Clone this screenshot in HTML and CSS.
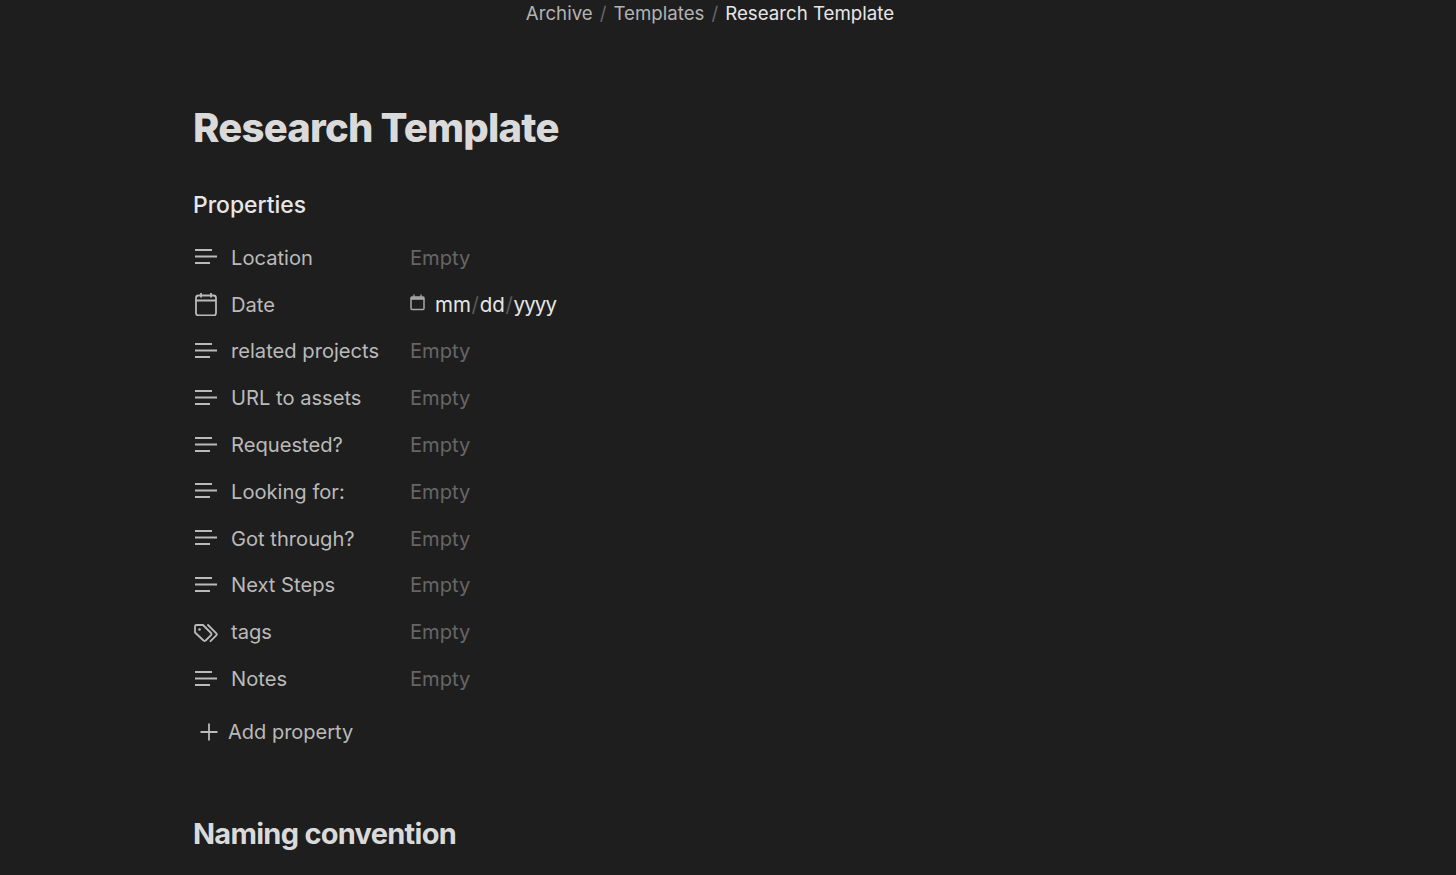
FILE: index.html
```html
<!DOCTYPE html>
<html lang="en">
<head>
<meta charset="utf-8">
<title>Research Template</title>
<link rel="stylesheet" href="styles.css">
</head>
<body>
<svg class="sprite" width="0" height="0" aria-hidden="true">
  <defs>
    <symbol id="lines" viewBox="0 0 24 24"><path d="M1 5h17M1 11.500h22M1 18h15" fill="none" stroke="currentColor" stroke-width="1.800"/></symbol>
  </defs>
</svg>
<nav class="crumbs">
  <span>Archive</span><span class="sep">/</span><span>Templates</span><span class="sep">/</span><span class="current">Research Template</span>
</nav>
<main class="page">
  <h1 class="title">Research Template</h1>
  <h2 class="props-head">Properties</h2>
  <div class="props">
    <div class="row"><svg class="icon"><use href="#lines"/></svg><span class="name">Location</span><span class="empty">Empty</span></div>
    <div class="row"><svg class="icon" viewBox="0 0 24 24"><g fill="none" stroke="currentColor" stroke-width="1.800"><rect x="2" y="3.500" width="20" height="20" rx="2.500"/><path d="M2 8.500h20M7 1v4.500M17 1v4.500"/></g></svg><span class="name">Date</span><span class="date"><svg class="mini" viewBox="0 0 15 17"><rect x="1" y="3" width="13" height="12.500" rx="1" fill="none" stroke="currentColor" stroke-width="1.500"/><path d="M1 4.500h13" stroke="currentColor" stroke-width="2.500"/><path d="M4 .5v2.500M11 .5v2.500" stroke="currentColor" stroke-width="1.300"/></svg><span>mm<i>/</i>dd<i>/</i><b>yyyy</b></span></span></div>
    <div class="row"><svg class="icon"><use href="#lines"/></svg><span class="name">related projects</span><span class="empty">Empty</span></div>
    <div class="row"><svg class="icon"><use href="#lines"/></svg><span class="name">URL to assets</span><span class="empty">Empty</span></div>
    <div class="row"><svg class="icon"><use href="#lines"/></svg><span class="name">Requested?</span><span class="empty">Empty</span></div>
    <div class="row"><svg class="icon"><use href="#lines"/></svg><span class="name">Looking for:</span><span class="empty">Empty</span></div>
    <div class="row"><svg class="icon"><use href="#lines"/></svg><span class="name">Got through?</span><span class="empty">Empty</span></div>
    <div class="row"><svg class="icon"><use href="#lines"/></svg><span class="name">Next Steps</span><span class="empty">Empty</span></div>
    <div class="row"><svg class="icon" viewBox="0 -3 24 24"><g fill="none" stroke="currentColor" stroke-width="1.800" stroke-linejoin="round" stroke-linecap="round"><path d="M1 3.500a1.500 1.500 0 0 1 1.500-1.500h6.500l8 8a1.500 1.500 0 0 1 0 2.200l-5.300 5.300a1.500 1.500 0 0 1-2.200 0l-8.500-8z"/><path d="M14 2l8.300 8.300a1.500 1.500 0 0 1 0 2.100l-5.800 5.800"/></g><circle cx="5.500" cy="6.500" r="1.300" fill="currentColor"/></svg><span class="name">tags</span><span class="empty">Empty</span></div>
    <div class="row"><svg class="icon"><use href="#lines"/></svg><span class="name">Notes</span><span class="empty">Empty</span></div>
  </div>
  <div class="add"><svg class="plus" viewBox="0 0 18 18"><path d="M9 .5v17M.5 9h17" fill="none" stroke="currentColor" stroke-width="1.800"/></svg><span>Add property</span></div>
  <h2 class="section">Naming convention</h2>
</main>
</body>
</html>
```
FILE: styles.css
```css
html, body {
  margin: 0;
  height: 875px;
  overflow: hidden;
  background: #1e1e1e;
}
body {
  font-family: Inter, "Liberation Sans", sans-serif;
  color: #dadada;
}
.sprite { position: absolute; }
.crumbs {
  display: flex;
  justify-content: center;
  gap: 7px;
  height: 27px;
  line-height: 27px;
  font-size: 18.700px;
  color: #b3b3b3;
  padding-right: 36px;
}
.crumbs .sep { color: #666; }
.crumbs .current { color: #e6e6e6; }
.page { padding-left: 193px; }
.title {
  margin: 0;
  padding-top: 72px;
  font-size: 40px;
  line-height: 58px;
  font-weight: 800;
  letter-spacing: -0.78px;
  color: #dadada;
}
.props-head {
  margin: 0;
  padding-top: 31px;
  font-size: 22.900px;
  line-height: 34px;
  font-weight: 500;
  color: #e6e6e6;
}
.props {
  display: flex;
  flex-direction: column;
  padding-top: 12px;
}
.row {
  display: flex;
  align-items: center;
  height: 46.800px;
  font-size: 20.150px;
  color: #bababa;
}
.icon {
  width: 24px;
  height: 24px;
  margin: 0 13px 0 1px;
  flex: none;
  color: #bababa;
}
.name { width: 179px; flex: none; }
.empty { color: #666; }
.date { display: flex; align-items: center; gap: 10px; font-size: 20.500px; color: #e6e6e6; }
.date i { font-style: normal; color: #5a5a5a; margin: 0 0.7px; }
.date b { font-weight: 400; letter-spacing: -0.9px; }
.mini { width: 15px; height: 17px; color: #a8a8a8; margin-top: -3px; }
.add {
  display: flex;
  align-items: center;
  gap: 10px;
  height: 47px;
  padding-top: 7px;
  padding-left: 7px;
  font-size: 20px;
  color: #bababa;
}
.plus { width: 18px; height: 18px; flex: none; }
.section {
  margin: 0;
  padding-top: 58px;
  font-size: 29px;
  line-height: 40px;
  font-weight: 700;
  letter-spacing: -0.73px;
  color: #dadada;
}
```
